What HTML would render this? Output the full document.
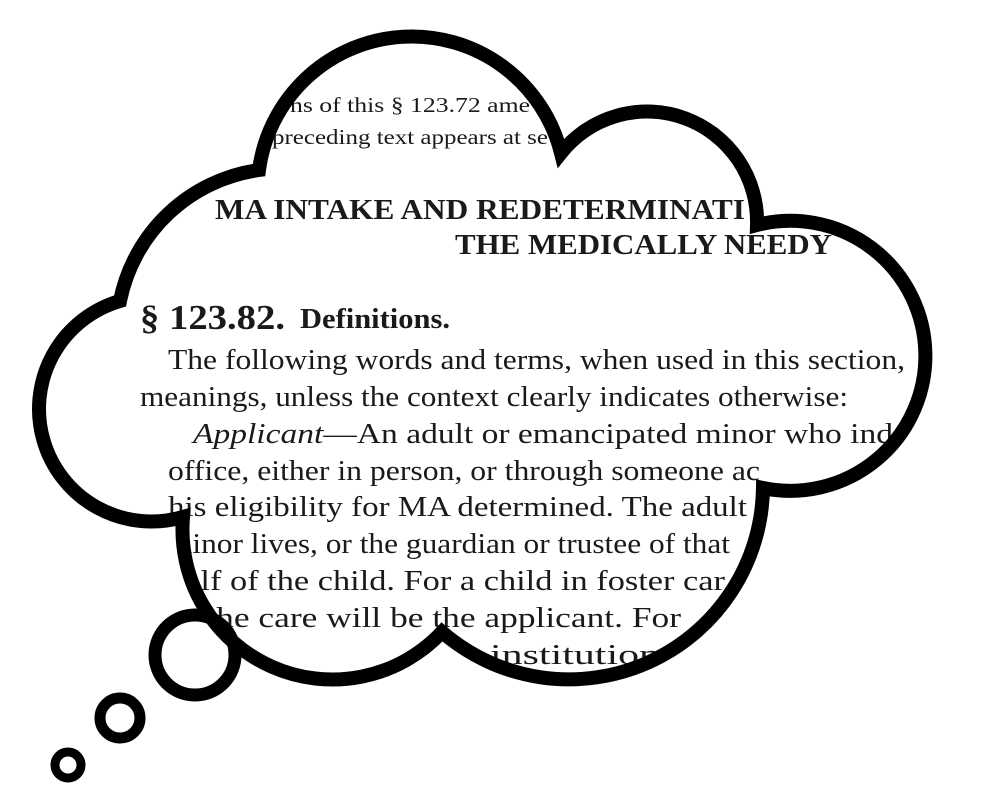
<!DOCTYPE html>
<html><head><meta charset="utf-8"><style>
html,body{margin:0;padding:0;background:#fff;}
svg{display:block;}
text{font-family:"Liberation Serif",serif;fill:#1a1a1a;}
</style></head><body>
<svg width="984" height="804" viewBox="0 0 984 804">
<defs>
<path id="cl" d="M259 170 A154 154 0 0 1 561 153 A110 110 0 0 1 757 225 A135 135 0 1 1 763 488 A194 194 0 0 1 442 632 A150 150 0 0 1 183 517 A112 112 0 0 1 120 301 A165 165 0 0 1 259 170 Z"/>
<clipPath id="c"><use href="#cl"/></clipPath>
</defs>
<use href="#cl" fill="#fff"/>
<g clip-path="url(#c)">
<text x="290" y="112" font-size="21" textLength="240" lengthAdjust="spacingAndGlyphs">ns of this §  123.72 ame</text>
<text x="272" y="144" font-size="21" textLength="276" lengthAdjust="spacingAndGlyphs">preceding text appears at se</text>
<text x="215" y="219" font-size="29" font-weight="bold" textLength="530" lengthAdjust="spacingAndGlyphs">MA INTAKE AND REDETERMINATI</text>
<text x="455" y="254" font-size="29" font-weight="bold" textLength="377" lengthAdjust="spacingAndGlyphs">THE MEDICALLY NEEDY</text>
<text x="140" y="329" font-size="35" font-weight="bold" textLength="145" lengthAdjust="spacingAndGlyphs">§  123.82.</text>
<text x="300" y="328" font-size="28" font-weight="bold" textLength="150" lengthAdjust="spacingAndGlyphs">Definitions.</text>
<text x="168" y="369" font-size="29" textLength="737" lengthAdjust="spacingAndGlyphs">The following words and terms, when used in this section,</text>
<text x="140" y="406" font-size="29" textLength="708" lengthAdjust="spacingAndGlyphs">meanings, unless the context clearly indicates otherwise:</text>
<text x="193" y="443" font-size="29" textLength="700" lengthAdjust="spacingAndGlyphs"><tspan font-style="italic">Applicant</tspan>—An  adult  or  emancipated  minor  who  ind</text>
<text x="168" y="480" font-size="29" textLength="592" lengthAdjust="spacingAndGlyphs">office, either in person, or through someone ac</text>
<text x="168" y="516" font-size="29" textLength="579" lengthAdjust="spacingAndGlyphs">his  eligibility  for  MA  determined.  The  adult</text>
<text x="168" y="553" font-size="29" textLength="562" lengthAdjust="spacingAndGlyphs">minor lives, or the guardian or trustee of that</text>
<text x="168" y="590" font-size="29" textLength="557" lengthAdjust="spacingAndGlyphs">half of the child. For a child in foster car</text>
<text x="168" y="627" font-size="29" textLength="513" lengthAdjust="spacingAndGlyphs">of the care will be the applicant. For</text>
<text x="440" y="664" font-size="29" textLength="220" lengthAdjust="spacingAndGlyphs">an institution</text>
</g>
<use href="#cl" fill="none" stroke="#000" stroke-width="14"/>
<circle cx="195" cy="655" r="40" fill="none" stroke="#000" stroke-width="13"/>
<circle cx="120" cy="718" r="20" fill="none" stroke="#000" stroke-width="11"/>
<circle cx="68" cy="765" r="13" fill="none" stroke="#000" stroke-width="9"/>
</svg>
</body></html>
